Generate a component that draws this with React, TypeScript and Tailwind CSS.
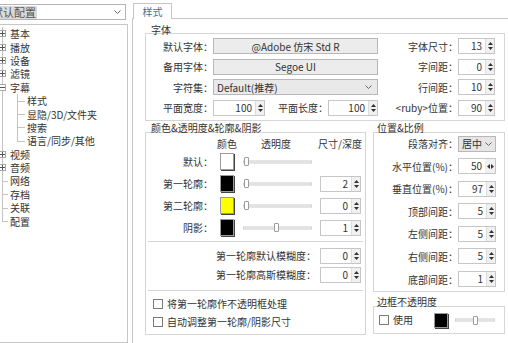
import React from "react";

type TreeNode = {
  label: string;
  kind: "plus" | "minus" | "leaf" | "child";
  last?: boolean;
};

const tree: TreeNode[] = [
  { label: "基本", kind: "plus" },
  { label: "播放", kind: "plus" },
  { label: "设备", kind: "plus" },
  { label: "滤镜", kind: "plus" },
  { label: "字幕", kind: "minus" },
  { label: "样式", kind: "child" },
  { label: "显隐/3D/文件夹", kind: "child" },
  { label: "搜索", kind: "child" },
  { label: "语言/同步/其他", kind: "child", last: true },
  { label: "视频", kind: "plus" },
  { label: "音频", kind: "plus" },
  { label: "网络", kind: "leaf" },
  { label: "存档", kind: "leaf" },
  { label: "关联", kind: "leaf" },
  { label: "配置", kind: "leaf", last: true },
];

function ExpandBox({ open }: { open: boolean }) {
  return (
    <div className="relative z-10 flex h-[7px] w-[7px] items-center justify-center border border-[#a8a8a8] bg-white">
      <svg width="5" height="5" viewBox="0 0 5 5">
        <path d="M0 2.5h5" stroke="#555" strokeWidth="1" />
        {open ? null : <path d="M2.5 0v5" stroke="#555" strokeWidth="1" />}
      </svg>
    </div>
  );
}

function TreeRow({ node }: { node: TreeNode }) {
  const topLast = node.kind === "leaf" && node.last;
  return (
    <div className="flex h-[13.4px] items-center">
      <div className="relative flex h-full w-[7px] items-center justify-center">
        <div className={`absolute left-[3px] top-0 border-l border-[#c4c4c4] ${topLast ? "h-1/2" : "bottom-0"}`} />
        {node.kind === "plus" ? <ExpandBox open={false} /> : null}
        {node.kind === "minus" ? <ExpandBox open /> : null}
        {node.kind === "leaf" ? <div className="absolute left-[3px] top-1/2 w-[6px] border-t border-[#c4c4c4]" /> : null}
      </div>
      {node.kind === "child" ? (
        <div className="relative ml-[10px] h-full w-[10px]">
          <div className={`absolute left-[1px] top-0 border-l border-[#c4c4c4] ${node.last ? "h-1/2" : "bottom-0"}`} />
          <div className="absolute left-[1px] top-1/2 w-[8px] border-t border-[#c4c4c4]" />
        </div>
      ) : null}
      <span className={`whitespace-nowrap leading-[13px] ${node.kind === "child" ? "ml-[1px]" : "ml-[4px]"}`}>{node.label}</span>
    </div>
  );
}

function Arrows({ horizontal }: { horizontal?: boolean }) {
  if (horizontal) {
    return (
      <div className="flex h-full w-[10px] items-center justify-center gap-[1px] bg-[#f0f0f0]">
        <svg width="3" height="5" viewBox="0 0 3 5"><path d="M3 0v5L0 2.5z" fill="#333" /></svg>
        <svg width="3" height="5" viewBox="0 0 3 5"><path d="M0 0v5l3-2.5z" fill="#333" /></svg>
      </div>
    );
  }
  return (
    <div className="flex h-full w-[9px] flex-col items-center justify-center gap-[2px] border-l border-[#dcdcdc] bg-[#f0f0f0]">
      <svg width="5" height="3" viewBox="0 0 5 3"><path d="M2.5 0L5 3H0z" fill="#333" /></svg>
      <svg width="5" height="3" viewBox="0 0 5 3"><path d="M0 0h5L2.5 3z" fill="#333" /></svg>
    </div>
  );
}

function Spin({ value, w, horizontal }: { value: string; w: string; horizontal?: boolean }) {
  return (
    <div className={`flex h-[16px] shrink-0 items-stretch border border-[#c6c6c6] bg-white ${w}`}>
      <span className="flex-1 pr-[3px] text-right leading-[14px]">{value}</span>
      <Arrows horizontal={horizontal} />
    </div>
  );
}

function Chevron() {
  return (
    <svg width="7" height="4" viewBox="0 0 7 4">
      <path d="M0.5 0.5L3.5 3.5L6.5 0.5" fill="none" stroke="#666" strokeWidth="1" />
    </svg>
  );
}

function Swatch({ color }: { color: string }) {
  return (
    <div className="ml-[7px] h-[17px] w-[14px] shrink-0 border border-[#9a9a9a] shadow-[1px_1px_0_#444]" style={{ background: color }} />
  );
}

function Slider({ w, at }: { w: string; at: string }) {
  return (
    <div className={`relative flex h-[12px] shrink-0 items-center ${w}`}>
      <div className="absolute inset-x-0 top-1/2 h-[3px] -translate-y-1/2 border border-[#d2d2d2] bg-[#f2f2f2]" />
      <div className={`relative h-[9px] w-[5px] rounded-[1px] border border-[#9c9c9c] bg-white ${at}`} />
    </div>
  );
}

function Check({ label }: { label: string }) {
  return (
    <div className="flex h-[12px] items-center gap-[4px]">
      <div className="h-[10px] w-[10px] border border-[#7a7a7a] bg-white" />
      <span className="leading-[12px]">{label}</span>
    </div>
  );
}

function ColorRow({ label, color, at, spin }: { label: string; color: string; at: string; spin?: string }) {
  return (
    <div className="flex h-[18px] items-center">
      <span className="w-[67px] text-right">{label}</span>
      <Swatch color={color} />
      <div className="ml-[9px]">
        <Slider w="w-[69px]" at={at} />
      </div>
      {spin ? (
        <div className="ml-[8px]">
          <Spin value={spin} w="w-[41px]" />
        </div>
      ) : null}
    </div>
  );
}

function PosRow({ label, children }: { label: string; children: React.ReactNode }) {
  return (
    <div className="flex h-[16px] items-center">
      <span className="w-[84px] whitespace-nowrap text-right">{label}</span>
      {children}
    </div>
  );
}

export default function App() {
  return (
    <div className="flex h-[343px] w-[508px] overflow-hidden bg-white font-['Noto_Sans_CJK_SC','Noto_Sans',sans-serif] text-[10px] text-[#333]">
      {/* left: profile + tree */}
      <div className="-ml-[12px] flex w-[140px] shrink-0 flex-col pt-[4px]">
        <div className="mr-[2px] flex h-[16px] items-center justify-between border border-[#b4b4b4] bg-white pl-[3px] pr-[4px]">
          <span className="bg-[#dadada] pr-[1px] text-[11px] leading-[13px] text-[#555]">默认配置</span>
          <Chevron />
        </div>
        <div className="mt-[4px] flex-1 border border-[#c6c6c6] pl-[10px] pt-[2px]">
          {tree.map((node) => (
            <TreeRow key={node.label} node={node} />
          ))}
        </div>
      </div>

      {/* right: tab page */}
      <div className="flex flex-1 flex-col pl-[4px]">
        <div className="flex h-[18px] items-end">
          <div className="relative z-10 -mb-px ml-[1px] flex h-[16px] w-[39px] items-center justify-center border border-b-0 border-[#c6c6c6] bg-white text-[#4b6d9f]">
            样式
          </div>
        </div>
        <div className="flex-1 border-l border-t border-[#c6c6c6] pl-[12px] pt-[6px]">
          {/* font group */}
          <div className="h-[10px] pl-[6px] leading-[10px]">字体</div>
          <div className="-mt-[2px] flex w-[360px] flex-col gap-[4.5px] border border-[#d6d6d6] pb-[4px] pt-[4px]">
            <div className="flex h-[16px] items-center">
              <span className="w-[67px] text-right">默认字体：</span>
              <div className="flex h-[16px] w-[165px] items-center justify-center border border-[#b8b8b8] bg-[#ececec]">@Adobe 仿宋 Std R</div>
              <span className="w-[80px] text-right">字体尺寸：</span>
              <Spin value="13" w="w-[37px]" />
            </div>
            <div className="flex h-[16px] items-center">
              <span className="w-[67px] text-right">备用字体：</span>
              <div className="flex h-[16px] w-[165px] items-center justify-center border border-[#b8b8b8] bg-[#ececec]">Segoe UI</div>
              <span className="w-[80px] text-right">字间距：</span>
              <Spin value="0" w="w-[37px]" />
            </div>
            <div className="flex h-[16px] items-center">
              <span className="w-[67px] text-right">字符集：</span>
              <div className="flex h-[16px] w-[165px] items-center justify-between border border-[#b8b8b8] bg-[#e9e9e9] pl-[3px] pr-[5px]">
                <span>Default(推荐)</span>
                <Chevron />
              </div>
              <span className="w-[80px] text-right">行间距：</span>
              <Spin value="10" w="w-[37px]" />
            </div>
            <div className="flex h-[16px] items-center">
              <span className="w-[67px] text-right">平面宽度：</span>
              <Spin value="100" w="w-[52px]" />
              <span className="w-[63px] text-right">平面长度：</span>
              <Spin value="100" w="w-[50px]" />
              <span className="w-[80px] whitespace-nowrap text-right">&lt;ruby&gt;位置：</span>
              <Spin value="90" w="w-[37px]" />
            </div>
          </div>

          <div className="mt-[2px] flex gap-[7px]">
            {/* colour group */}
            <div className="w-[221px] shrink-0">
              <div className="h-[10px] pl-[6px] leading-[10px]">颜色&amp;透明度&amp;轮廓&amp;阴影</div>
              <div className="-mt-[1px] border border-[#d6d6d6] pb-[6px] pt-[6px]">
                <div className="flex h-[10px] items-center leading-[10px]">
                  <span className="w-[67px]" />
                  <span className="w-[28px] text-center">颜色</span>
                  <span className="w-[70px] text-center">透明度</span>
                  <span className="w-[51px] text-right">尺寸/深度</span>
                </div>
                <div className="mt-[4px] flex flex-col gap-[4px]">
                  <ColorRow label="默认：" color="#ffffff" at="ml-[1px]" />
                  <ColorRow label="第一轮廓：" color="#000000" at="ml-[1px]" spin="2" />
                  <ColorRow label="第二轮廓：" color="#ffff00" at="ml-[1px]" spin="0" />
                  <ColorRow label="阴影：" color="#000000" at="ml-[31px]" spin="1" />
                </div>
                <div className="mx-[2px] mt-[4px] border-t border-[#d6d6d6]" />
                <div className="mt-[6px] flex flex-col gap-[3px]">
                  <div className="flex h-[16px] items-center">
                    <span className="w-[170px] text-right">第一轮廓默认模糊度：</span>
                    <div className="ml-[4px]">
                      <Spin value="0" w="w-[41px]" />
                    </div>
                  </div>
                  <div className="flex h-[16px] items-center">
                    <span className="w-[170px] text-right">第一轮廓高斯模糊度：</span>
                    <div className="ml-[4px]">
                      <Spin value="0" w="w-[41px]" />
                    </div>
                  </div>
                </div>
                <div className="mx-[2px] mt-[7px] border-t border-[#d6d6d6]" />
                <div className="mt-[7px] flex flex-col gap-[6px] pl-[7px]">
                  <Check label="将第一轮廓作不透明框处理" />
                  <Check label="自动调整第一轮廓/阴影尺寸" />
                </div>
              </div>
            </div>

            {/* position + border opacity */}
            <div className="w-[132px] shrink-0">
              <div className="h-[10px] pl-[4px] leading-[10px]">位置&amp;比例</div>
              <div className="-mt-[1px] flex flex-col gap-[6.6px] border border-[#d6d6d6] pb-[4px] pt-[3px]">
                <PosRow label="段落对齐：">
                  <div className="flex h-[16px] w-[38px] items-center justify-between border border-[#b8b8b8] bg-[#e6e6e6] pl-[3px] pr-[3px]">
                    <span>居中</span>
                    <Chevron />
                  </div>
                </PosRow>
                <PosRow label="水平位置(%)：">
                  <Spin value="50" w="w-[38px]" horizontal />
                </PosRow>
                <PosRow label="垂直位置(%)：">
                  <Spin value="97" w="w-[38px]" />
                </PosRow>
                <PosRow label="顶部间距：">
                  <Spin value="5" w="w-[38px]" />
                </PosRow>
                <PosRow label="左侧间距：">
                  <Spin value="5" w="w-[38px]" />
                </PosRow>
                <PosRow label="右侧间距：">
                  <Spin value="5" w="w-[38px]" />
                </PosRow>
                <PosRow label="底部间距：">
                  <Spin value="1" w="w-[38px]" />
                </PosRow>
              </div>

              <div className="mt-[5px] h-[10px] pl-[4px] leading-[10px]">边框不透明度</div>
              <div className="-mt-[1px] flex h-[28px] items-center border border-[#d6d6d6] pl-[5px]">
                <Check label="使用" />
                <div className="ml-[21px] h-[15px] w-[14px] border border-[#9a9a9a] bg-black shadow-[1px_1px_0_#444]" />
                <div className="ml-[7px]">
                  <Slider w="w-[40px]" at="ml-[18px]" />
                </div>
              </div>
            </div>
          </div>
        </div>
      </div>
    </div>
  );
}
